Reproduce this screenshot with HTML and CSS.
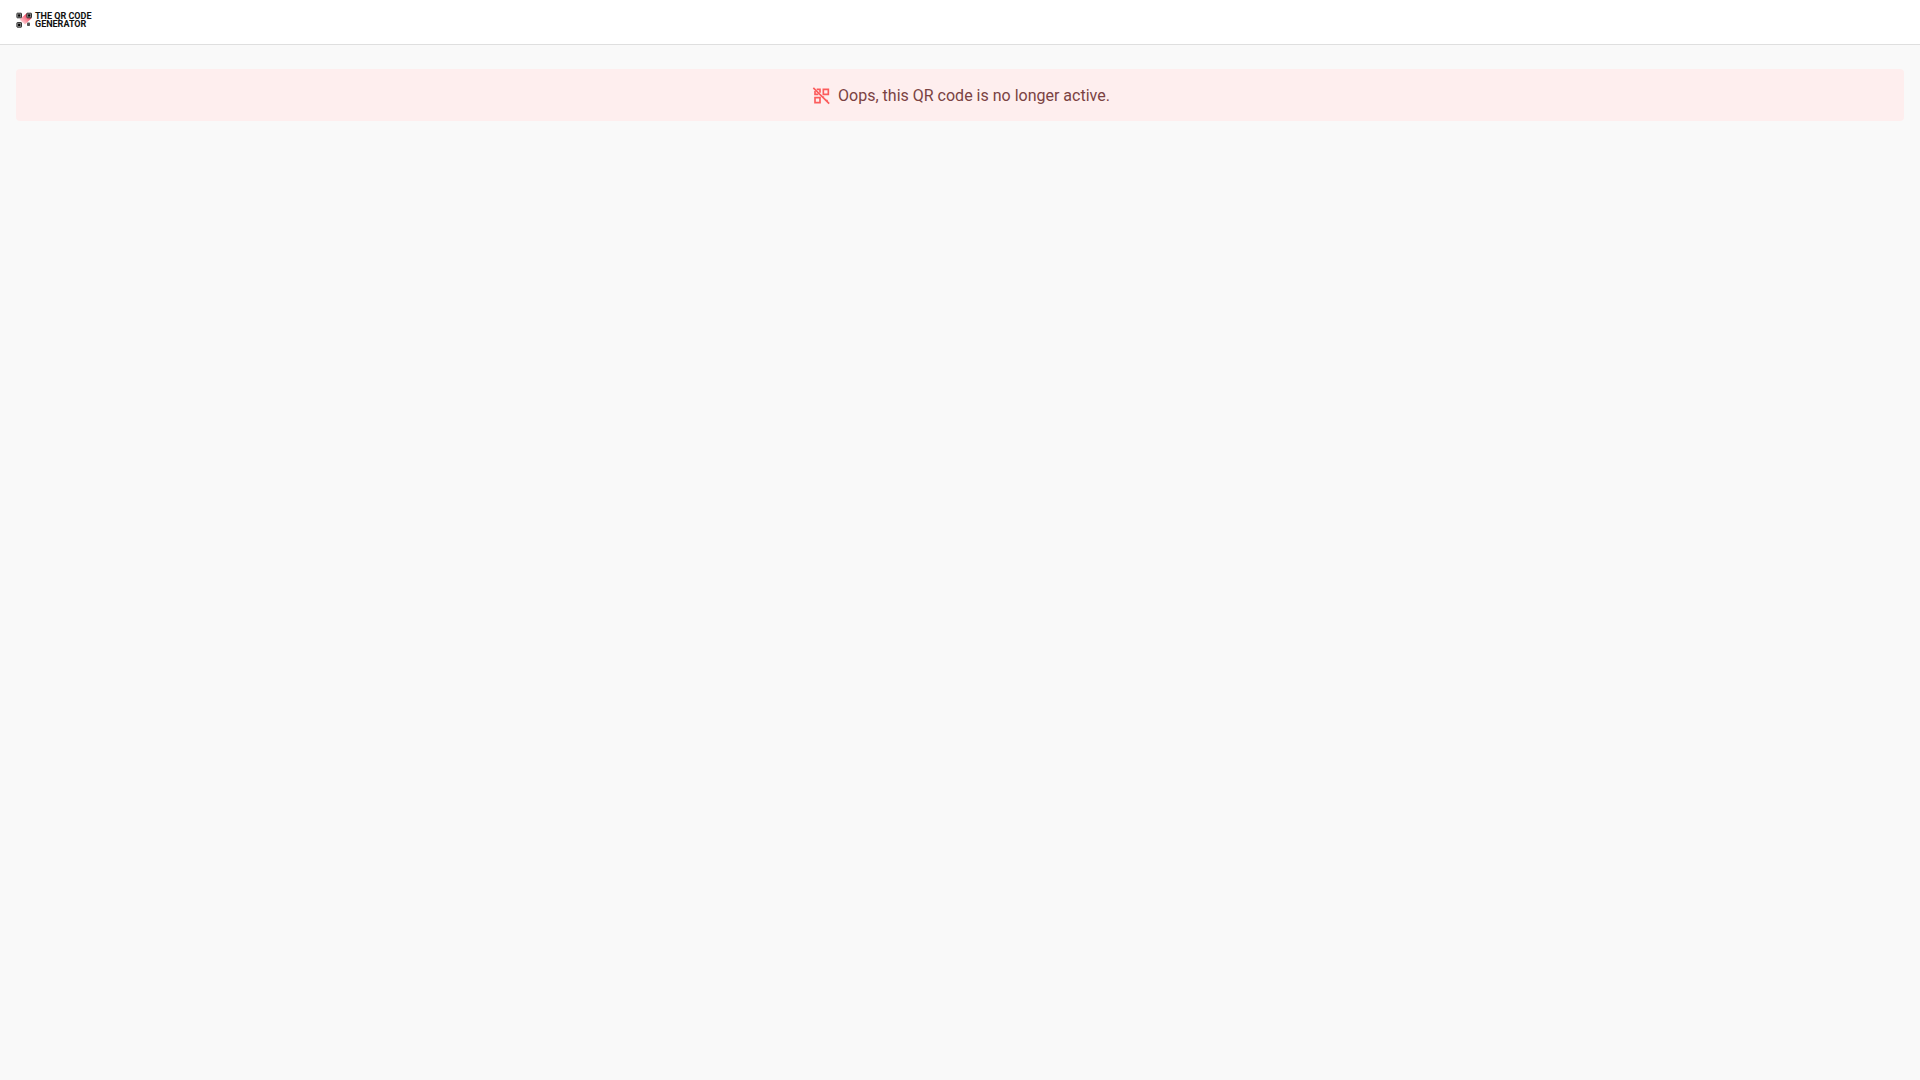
FILE: index.html
```
<!DOCTYPE html>
<html lang="en">
<head>
<meta charset="utf-8">
<meta name="viewport" content="width=device-width, initial-scale=1">
<title>The QR Code Generator</title>
<link rel="stylesheet" href="styles.css">
</head>
<body>
<header class="header">
  <div class="logo">
    <svg class="logo-mark" viewBox="0 0 16 16" aria-hidden="true">
      <defs>
        <linearGradient id="beam" x1="1" y1="0" x2="0" y2="1">
          <stop offset="0.2" stop-color="#f0304c"/>
          <stop offset="1" stop-color="#ff5a6e" stop-opacity="0.05"/>
        </linearGradient>
      </defs>
      <path d="M11 1L15.5 6.2L9 12.5L3.5 7.5Z" fill="url(#beam)"/>
      <g fill="#999" stroke="#333" stroke-width="1">
        <rect x="0.9" y="1.2" width="4.6" height="4.6" rx="0.4"/>
        <rect x="10.9" y="1.2" width="4.6" height="4.6" rx="0.4"/>
        <rect x="0.9" y="10.6" width="4.6" height="4.6" rx="0.4"/>
      </g>
      <g fill="#000">
        <rect x="2.1" y="2.4" width="2.2" height="2.2"/>
        <rect x="12.1" y="2.4" width="2.2" height="2.2"/>
        <rect x="2.1" y="11.8" width="2.2" height="2.2"/>
      </g>
      <rect x="11" y="10.6" width="3" height="3.4" rx="0.8" fill="#555"/>
    </svg>
    <div class="logo-text"><span>THE QR CODE</span><span>GENERATOR</span></div>
  </div>
</header>
<main class="main">
  <div class="alert" role="alert">
    <svg class="alert-icon" viewBox="-2 0 24 24" fill="none" stroke="#fc5c5c" stroke-width="2" aria-hidden="true">
      <path d="M6 4H10V8M4 6V10H8"/>
      <path d="M14 4H20V10H14Z"/>
      <path d="M4 14H10V20H4Z"/>
      <path d="M2 2.2L21 21.2"/>
      <path d="M13 13H15M17 17H19V19" stroke-width="1"/>
    </svg>
    <p class="alert-text">Oops, this QR code is no longer active.</p>
  </div>
</main>
</body>
</html>
```
FILE: styles.css
```
* { box-sizing: border-box; }
body {
  margin: 0;
  min-height: 100vh;
  background: #f9f9f9;
  font-family: Roboto, sans-serif;
}
.header {
  display: flex;
  align-items: flex-start;
  min-height: 45px;
  padding: 12px 16px;
  background: #fff;
  border-bottom: 1px solid #dfdfdf;
}
.logo {
  display: flex;
  align-items: center;
  gap: 3px;
}
.logo-mark {
  width: 16px;
  height: 16px;
}
.logo-text {
  display: flex;
  flex-direction: column;
  color: #111;
  font-size: 9px;
  font-weight: 700;
  line-height: 8px;
  white-space: nowrap;
}
.main { padding: 24px 16px; }
.alert {
  display: flex;
  align-items: center;
  justify-content: center;
  gap: 8px;
  padding: 15px 16px 13px;
  border-radius: 4px;
  background: #feeeee;
}
.alert-icon {
  width: 20px;
  height: 20px;
  flex: none;
}
.alert-text {
  margin: 0;
  color: #7a4242;
  font-size: 16px;
  line-height: 24px;
}
```
